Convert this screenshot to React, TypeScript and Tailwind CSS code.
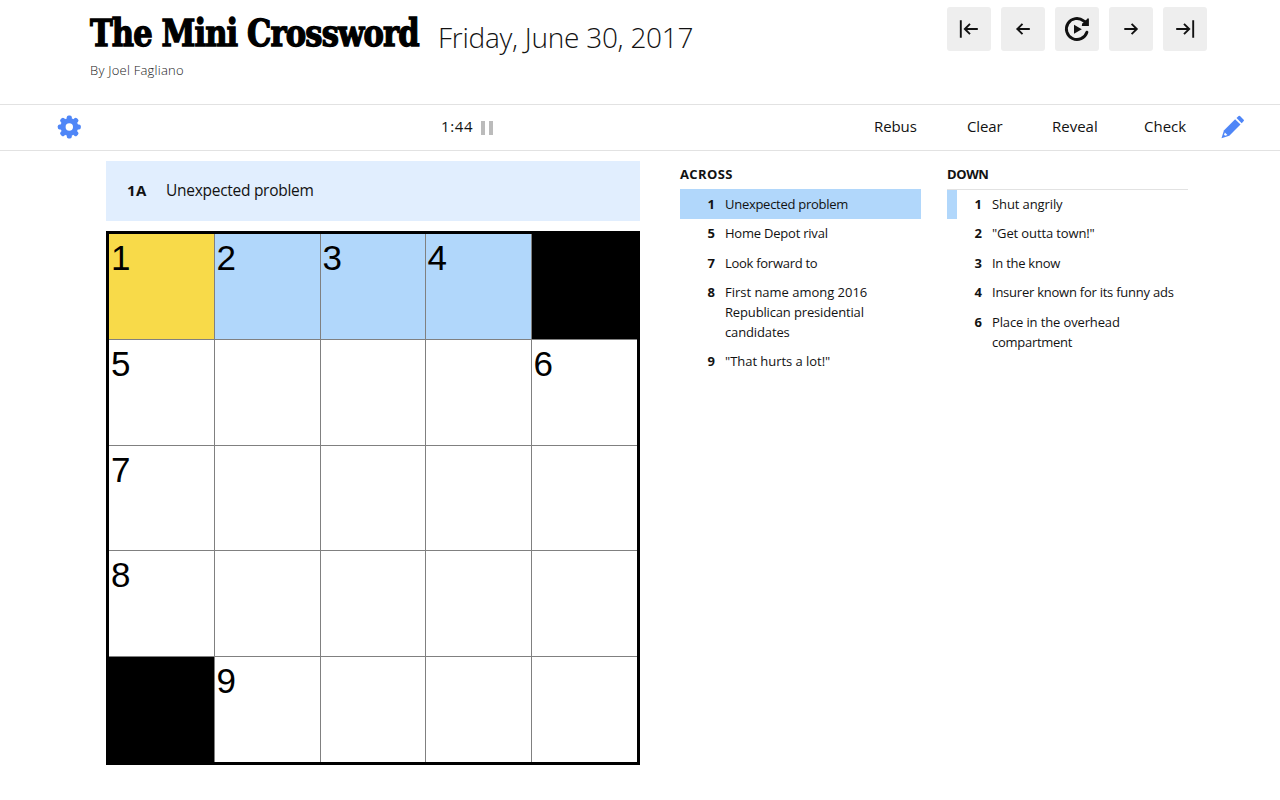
import React from "react";

type Line = [text: string, tracking: string];
type Clue = { n: number; lines: Line[] };

const across: Clue[] = [
  { n: 1, lines: [["Unexpected problem", "tracking-[-0.28px]"]] },
  { n: 5, lines: [["Home Depot rival", "tracking-[-0.22px]"]] },
  { n: 7, lines: [["Look forward to", "tracking-[-0.28px]"]] },
  {
    n: 8,
    lines: [
      ["First name among 2016", "tracking-[-0.02px]"],
      ["Republican presidential", "tracking-[-0.15px]"],
      ["candidates", "tracking-[-0.13px]"],
    ],
  },
  { n: 9, lines: [['"That hurts a lot!"', "tracking-[-0.04px]"]] },
];

const down: Clue[] = [
  { n: 1, lines: [["Shut angrily", "tracking-[-0.1px]"]] },
  { n: 2, lines: [['"Get outta town!"', "tracking-[-0.12px]"]] },
  { n: 3, lines: [["In the know", "tracking-[-0.27px]"]] },
  { n: 4, lines: [["Insurer known for its funny ads", "tracking-[-0.24px]"]] },
  {
    n: 6,
    lines: [
      ["Place in the overhead", "tracking-[-0.13px]"],
      ["compartment", "tracking-[-0.27px]"],
    ],
  },
];

const cells = ["1a", "2b", "3b", "4b", "#", "5", "", "", "", "6", "7", "", "", "", "", "8", "", "", "", "", "#", "9", "", "", ""];

function cellColor(c: string) {
  if (c === "#") return "bg-black";
  if (c.endsWith("a")) return "bg-[#f8da49]";
  if (c.endsWith("b")) return "bg-[#b1d7fb]";
  return "bg-white";
}

function Board() {
  return (
    <div className="mt-[10px] grid h-[534px] w-[534px] grid-cols-[105px_106px_105px_106px_106px] grid-rows-[105px_106px_105px_106px_106px] border-[3px] border-black font-['Liberation_Sans',Arial,sans-serif] text-black">
      {cells.map((c, i) => (
        <div
          key={i}
          className={`pt-[4px] text-[35px] leading-[40px] ${cellColor(c)} ${i % 5 ? "border-l border-[#808080] pl-[1.5px]" : "pl-[2px]"} ${i > 4 ? "border-t border-[#808080]" : ""}`}
        >
          {c.replace(/[ab#]/g, "")}
        </div>
      ))}
    </div>
  );
}

function ClueList({ title, clues, list }: { title: string; clues: Clue[]; list: "across" | "down" }) {
  return (
    <section className="w-[241px]">
      <h2 className={`h-[29px] border-b border-[#e2e2e2] pt-[3px] text-[13px] font-bold leading-[20px] ${list === "across" ? "tracking-[0.4px]" : "tracking-[-0.4px]"}`}>
        {title}
      </h2>
      <ol>
        {clues.map((c, i) => (
          <li
            key={c.n}
            className={`flex py-[4.9px] ${i === 0 && list === "across" ? "-mt-px border-t border-t-[#b1d7fb] bg-[#b1d7fb]" : ""} ${i === 0 ? "border-l-[10px] border-l-[#b1d7fb]" : "border-l-[10px] border-l-transparent"}`}
          >
            <span className="w-[25px] text-right text-[13px] font-bold leading-[19.7px]">{c.n}</span>
            <span className="ml-[10px] whitespace-nowrap text-[13px] leading-[19.7px]">
              {c.lines.map(([text, tracking]) => (
                <span key={text} className={`block ${tracking}`}>{text}</span>
              ))}
            </span>
          </li>
        ))}
      </ol>
    </section>
  );
}

function NavButton({ children, label }: { children: React.ReactNode; label: string }) {
  return (
    <button aria-label={label} className="flex h-[44px] w-[44px] items-center justify-center rounded-[3px] bg-[#eeeeee]">
      <svg width="44" height="44" viewBox="0 0 44 44" fill="none" stroke="#111" strokeWidth="1.9">
        {children}
      </svg>
    </button>
  );
}

function Gear() {
  return (
    <svg className="mb-px" width="24" height="24" viewBox="-12.3 -12 24 24" fill="#4f86f7">
      {[0, 45, 90, 135].map((a) => (
        <rect key={a} x="-2.5" y="-11.5" width="5" height="23" rx="1.8" transform={`rotate(${a})`} />
      ))}
      <circle r="8.9" />
      <circle r="3.7" fill="#fff" />
    </svg>
  );
}

export default function App() {
  return (
    <div className="h-[800px] w-[1280px] overflow-hidden bg-white font-['Open_Sans','Noto_Sans',sans-serif] text-[#121212]">
      <header className="flex h-[104px] justify-between pl-[90px] pr-[73px] pt-[7px]">
        <div>
          <div className="flex h-[53px] items-start whitespace-nowrap">
            <h1 className="w-[348px] text-[38px] font-bold leading-[48px] text-black">
              <span className="inline-block origin-left scale-x-[0.895] font-['DejaVu_Serif_Condensed','DejaVu_Serif',serif] tracking-[-1px] [-webkit-text-stroke:1.3px_#000] [font-stretch:condensed]">
                The Mini Crossword
              </span>
            </h1>
            <span className="text-[28px] font-light leading-[60px] tracking-[-0.26px]">Friday, June 30, 2017</span>
          </div>
          <p className="text-[13px] font-light leading-[20px] tracking-[0.24px] text-[#222]">By Joel Fagliano</p>
        </div>
        <nav className="flex gap-[10px]">
          <NavButton label="First">
            <path d="M13.8 13.2V30.8M30.8 22H17.8M23 16.8L17.8 22L23 27.2" />
          </NavButton>
          <NavButton label="Previous">
            <path d="M28.8 22H16.3M21.5 16.8L16.3 22L21.5 27.2" />
          </NavButton>
          <NavButton label="Random">
            <path d="M31.9 25.2A10.5 10.5 0 1 1 28.6 13.9" strokeWidth="2.9" strokeLinecap="round" />
            <path d="M33.9 11.5V19.1H26.8L27.2 16.4L29 15L29.2 13L31 13.2L32.4 11.5Z" fill="#111" stroke="none" />
            <path d="M19 17.7L26.8 22.2L19 26.7Z" fill="#111" stroke="none" />
          </NavButton>
          <NavButton label="Next">
            <path d="M15.3 22H27.8M22.6 16.8L27.8 22L22.6 27.2" />
          </NavButton>
          <NavButton label="Last">
            <path d="M30.2 13.2V30.8M13.2 22H26.2M21 16.8L26.2 22L21 27.2" />
          </NavButton>
        </nav>
      </header>

      <div className="flex h-[47px] items-center border-y border-[#e2e2e2] pl-[57px] pr-[35px] text-[15px]">
        <Gear />
        <div className="ml-[360px] flex items-center gap-[8px] leading-[20px]">
          <span className="w-[32px] whitespace-nowrap pb-[3px] text-[15px] tracking-[0.65px]">1:44</span>
          <span className="flex gap-[4px]">
            <i className="h-[14px] w-[4px] bg-[#bbb]" />
            <i className="h-[14px] w-[4px] bg-[#bbb]" />
          </span>
        </div>
        <div className="ml-auto flex items-center whitespace-nowrap leading-[20px]">
          <span className="w-[93px] pb-[4px] tracking-[-0.1px]">Rebus</span>
          <span className="w-[85px] pb-[4px] tracking-[-0.1px]">Clear</span>
          <span className="w-[92px] pb-[4px]">Reveal</span>
          <span className="w-[77px] pb-[4px]">Check</span>
          <svg className="mb-px" width="24" height="24" viewBox="0.5 0 24 24" fill="#4f86f7">
            <path d="M1 23.2L3.4 15.4L14.6 4.2L20 9.6L8.8 20.8Z" />
            <path d="M16 3L18.1 .9Q18.8 .4 19.5 1L23.2 4.7Q23.8 5.4 23.2 6.1L21.2 8.2Z" />
            <path d="M4.4 17.4L6.9 19.9L4.6 20.7L3.5 19.7Z" fill="#fff" />
          </svg>
        </div>
      </div>

      <main className="flex pl-[106px] pt-[10px]">
        <div className="w-[534px]">
          <div className="flex h-[60px] items-center bg-[#e1eefe] pb-[2px] pl-[21px] text-[16px] leading-[20px]">
            <b className="w-[39px] text-[15px] tracking-[0.3px]">1A</b>
            <span className="whitespace-nowrap text-[15.5px] tracking-[-0.28px]">Unexpected problem</span>
          </div>
          <Board />
        </div>
        <div className="ml-[40px] flex gap-[26px]">
          <ClueList title="ACROSS" clues={across} list="across" />
          <ClueList title="DOWN" clues={down} list="down" />
        </div>
      </main>
    </div>
  );
}
